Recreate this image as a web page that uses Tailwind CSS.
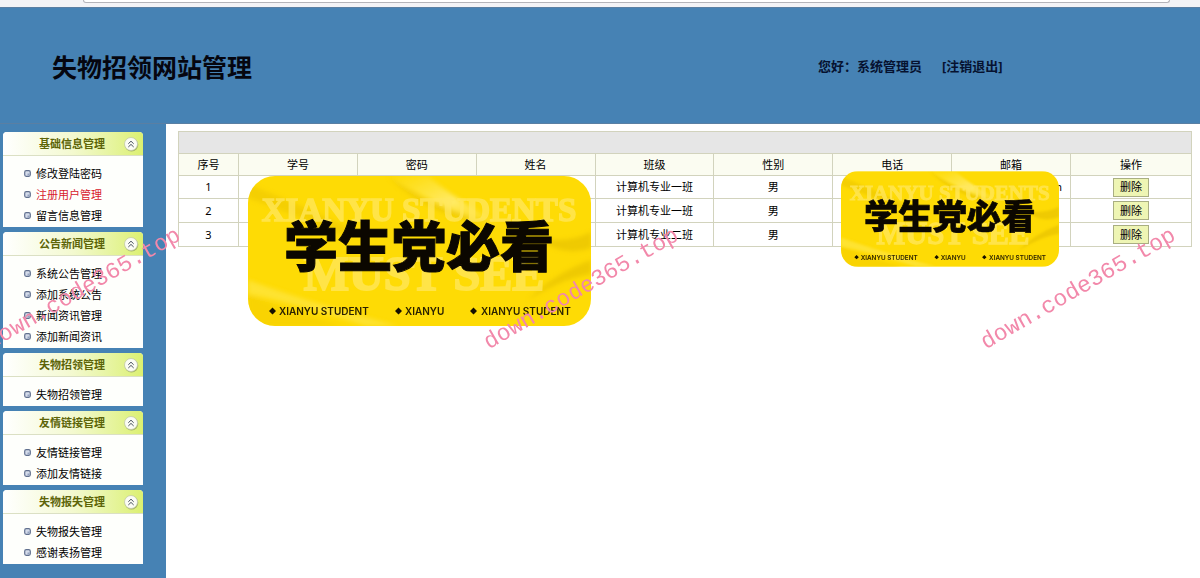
<!DOCTYPE html>
<html lang="zh-CN">
<head>
<meta charset="utf-8">
<title>失物招领网站管理</title>
<script src="https://cdn.jsdelivr.net/npm/@tailwindcss/browser@4"></script>
</head>
<body class="relative flex min-h-screen flex-col overflow-x-hidden bg-white font-['Noto_Sans','Noto_Sans_CJK_SC',sans-serif] text-[11px] text-black">

<svg class="absolute size-0" aria-hidden="true">
  <defs>
    <linearGradient id="fold" x1="0" y1="0" x2="1" y2="1">
      <stop offset="0" stop-color="#ffea5c" stop-opacity="0"/>
      <stop offset=".5" stop-color="#fff08a" stop-opacity=".75"/>
      <stop offset="1" stop-color="#ffe030" stop-opacity="0"/>
    </linearGradient>
    <filter id="soft"><feGaussianBlur stdDeviation="2"/></filter>
    <symbol id="banner" viewBox="0 0 343 150">
      <rect width="343" height="150" fill="#fedb05"/>
      <g filter="url(#soft)">
        <path d="M0 8Q60 32 118 60L90 58Q40 36 0 22Z" fill="#e9c200" opacity=".45"/>
        <path d="M140 0Q185 28 250 52L262 54Q205 22 180 0Z" fill="url(#fold)"/>
        <path d="M140 0Q180 30 240 46L215 44Q165 28 140 0Z" fill="#e3bd00" opacity=".45"/>
        <path d="M343 56Q320 68 290 62Q315 82 343 72Z" fill="#dfba00" opacity=".5"/>
        <path d="M343 84Q305 98 280 124Q315 102 343 98Z" fill="#dfba00" opacity=".5"/>
        <path d="M0 104Q60 126 150 150L118 150Q50 128 0 118Z" fill="#ffec5c" opacity=".5"/>
        <path d="M0 118Q40 136 95 150L0 150Z" fill="#f3cb00" opacity=".5"/>
      </g>
      <g fill="#ffe75f" stroke="#ffe75f" font-family="'Liberation Serif', serif" font-weight="700" text-anchor="middle" opacity=".75">
        <text x="171" y="45" font-size="33" stroke-width="1.500">XIANYU STUDENTS</text>
        <text x="176" y="114" font-size="48" stroke-width="2">MUST SEE</text>
      </g>
      <text x="171" y="91" text-anchor="middle" font-family="'Noto Sans CJK SC', sans-serif" font-weight="900" font-size="54" fill="#0b0700" stroke="#0b0700">学生党必看</text>
      <g font-family="Inter, 'Liberation Sans', sans-serif" font-weight="600" font-size="10" fill="#2b2200">
        <text x="31" y="139">XIANYU STUDENT</text>
        <text x="157" y="139">XIANYU</text>
        <text x="233" y="139">XIANYU STUDENT</text>
      </g>
      <path d="M21 135l3.500-3.500 3.500 3.500-3.500 3.500zM147 135l3.500-3.500 3.500 3.500-3.500 3.500zM222 135l3.500-3.500 3.500 3.500-3.500 3.500z" fill="#150f00"/>
    </symbol>
    <symbol id="fold-up" viewBox="0 0 16 16">
      <circle cx="8.500" cy="8.800" r="6.800" fill="#8d9a58" opacity=".7"/>
      <circle cx="8" cy="8" r="6.500" fill="#fbfcf5" stroke="#c3caa6" stroke-width=".8"/>
      <path d="M5.300 7.800L8 5.200l2.700 2.600M5.300 11L8 8.400l2.700 2.600" fill="none" stroke="#4a5260"/>
    </symbol>
    <symbol id="dot" viewBox="0 0 7 7">
      <rect x=".7" y=".7" width="5.600" height="5.600" rx="1.500" fill="#d5dcea" stroke="#62718f" stroke-width="1.200"/>
      <path d="M3.500 3.500h2v2h-2z" fill="#93a2bf"/>
    </symbol>
  </defs>
</svg>

<div class="h-[7px] bg-[#f3f3f6] pr-[30px] pl-[83px]">
  <div class="h-[3px] rounded-b-sm border border-t-0 border-[#b4b4ba] bg-white"></div>
</div>

<header class="flex h-[117px] items-center border-y border-[#5a7fa3] bg-[#4682b4] font-bold">
  <h1 class="w-[818px] shrink-0 pt-0.5 pl-[52px] text-[25px] leading-8 text-[#05060f]">失物招领网站管理</h1>
  <p class="flex gap-5 text-[13px] leading-5 text-[#061230]"><span>您好：系统管理员</span><a href="#">[注销退出]</a></p>
</header>

<div class="flex flex-1">
  <nav class="flex w-[166px] shrink-0 flex-col gap-[5px] bg-[#4682b4] pt-2 pr-[23px] pb-3 pl-[3px]">
    <section class="overflow-hidden rounded-t bg-[#fefffc] pb-px">
      <h2 class="flex h-6 items-center justify-between border-b border-[#dbe0c4] bg-linear-to-r from-white via-[#f3f9cf] to-[#dcf070] pr-1 pl-9 pt-px font-bold text-[#5c6408]">基础信息管理<button type="button" aria-label="收起"><svg class="size-4"><use href="#fold-up"/></svg></button></h2>
      <ul class="pt-[7px] pl-[21px] leading-[21px]">
        <li class="flex items-center gap-[5px]"><svg class="size-[7px]"><use href="#dot"/></svg><a href="#">修改登陆密码</a></li>
        <li class="flex items-center gap-[5px]"><svg class="size-[7px]"><use href="#dot"/></svg><a href="#" class="text-[#d8202c]">注册用户管理</a></li>
        <li class="flex items-center gap-[5px]"><svg class="size-[7px]"><use href="#dot"/></svg><a href="#">留言信息管理</a></li>
      </ul>
    </section>
    <section class="overflow-hidden rounded-t bg-[#fefffc] pb-px">
      <h2 class="flex h-6 items-center justify-between border-b border-[#dbe0c4] bg-linear-to-r from-white via-[#f3f9cf] to-[#dcf070] pr-1 pl-9 pt-px font-bold text-[#5c6408]">公告新闻管理<button type="button" aria-label="收起"><svg class="size-4"><use href="#fold-up"/></svg></button></h2>
      <ul class="pt-[7px] pl-[21px] leading-[21px]">
        <li class="flex items-center gap-[5px]"><svg class="size-[7px]"><use href="#dot"/></svg><a href="#">系统公告管理</a></li>
        <li class="flex items-center gap-[5px]"><svg class="size-[7px]"><use href="#dot"/></svg><a href="#">添加系统公告</a></li>
        <li class="flex items-center gap-[5px]"><svg class="size-[7px]"><use href="#dot"/></svg><a href="#">新闻资讯管理</a></li>
        <li class="flex items-center gap-[5px]"><svg class="size-[7px]"><use href="#dot"/></svg><a href="#">添加新闻资讯</a></li>
      </ul>
    </section>
    <section class="overflow-hidden rounded-t bg-[#fefffc] pb-px">
      <h2 class="flex h-6 items-center justify-between border-b border-[#dbe0c4] bg-linear-to-r from-white via-[#f3f9cf] to-[#dcf070] pr-1 pl-9 pt-px font-bold text-[#5c6408]">失物招领管理<button type="button" aria-label="收起"><svg class="size-4"><use href="#fold-up"/></svg></button></h2>
      <ul class="pt-[7px] pl-[21px] leading-[21px]">
        <li class="flex items-center gap-[5px]"><svg class="size-[7px]"><use href="#dot"/></svg><a href="#">失物招领管理</a></li>
      </ul>
    </section>
    <section class="overflow-hidden rounded-t bg-[#fefffc] pb-px">
      <h2 class="flex h-6 items-center justify-between border-b border-[#dbe0c4] bg-linear-to-r from-white via-[#f3f9cf] to-[#dcf070] pr-1 pl-9 pt-px font-bold text-[#5c6408]">友情链接管理<button type="button" aria-label="收起"><svg class="size-4"><use href="#fold-up"/></svg></button></h2>
      <ul class="pt-[7px] pl-[21px] leading-[21px]">
        <li class="flex items-center gap-[5px]"><svg class="size-[7px]"><use href="#dot"/></svg><a href="#">友情链接管理</a></li>
        <li class="flex items-center gap-[5px]"><svg class="size-[7px]"><use href="#dot"/></svg><a href="#">添加友情链接</a></li>
      </ul>
    </section>
    <section class="overflow-hidden rounded-t bg-[#fefffc] pb-px">
      <h2 class="flex h-6 items-center justify-between border-b border-[#dbe0c4] bg-linear-to-r from-white via-[#f3f9cf] to-[#dcf070] pr-1 pl-9 pt-px font-bold text-[#5c6408]">失物报失管理<button type="button" aria-label="收起"><svg class="size-4"><use href="#fold-up"/></svg></button></h2>
      <ul class="pt-[7px] pl-[21px] leading-[21px]">
        <li class="flex items-center gap-[5px]"><svg class="size-[7px]"><use href="#dot"/></svg><a href="#">失物报失管理</a></li>
        <li class="flex items-center gap-[5px]"><svg class="size-[7px]"><use href="#dot"/></svg><a href="#">感谢表扬管理</a></li>
      </ul>
    </section>
  </nav>

  <main class="min-w-0 flex-1 pt-[7px] pr-2 pl-3">
    <table class="w-full table-fixed border-collapse text-center leading-4 [&_td]:border [&_td]:border-[#d2d3bd] [&_th]:border [&_th]:border-[#d2d3bd] [&_th]:font-normal">
      <colgroup><col class="w-[60px]"><col><col><col><col><col><col><col><col class="w-[121px]"></colgroup>
      <thead>
        <tr class="h-[22px] bg-[#e6e6e6]"><td colspan="9"></td></tr>
        <tr class="h-[22px] bg-[#fbfcf1]"><th>序号</th><th>学号</th><th>密码</th><th>姓名</th><th>班级</th><th>性别</th><th>电话</th><th>邮箱</th><th>操作</th></tr>
      </thead>
      <tbody>
        <tr class="h-[23px]"><td>1</td><td></td><td></td><td></td><td>计算机专业一班</td><td>男</td><td></td><td class="pr-2 text-right">m</td><td><button type="button" class="mx-auto block h-[19px] w-9 border border-[#a9ae82] bg-[#eef5b4] leading-4">删除</button></td></tr>
        <tr class="h-6"><td>2</td><td></td><td></td><td></td><td>计算机专业一班</td><td>男</td><td></td><td></td><td><button type="button" class="mx-auto block h-[19px] w-9 border border-[#a9ae82] bg-[#eef5b4] leading-4">删除</button></td></tr>
        <tr class="h-6"><td>3</td><td></td><td></td><td></td><td>计算机专业二班</td><td>男</td><td></td><td></td><td><button type="button" class="mx-auto block h-[19px] w-9 border border-[#a9ae82] bg-[#eef5b4] leading-4">删除</button></td></tr>
      </tbody>
    </table>
  </main>
</div>

<svg class="absolute top-[176px] left-[248px] h-[150px] w-[343px] rounded-[27px]" role="img" aria-label="学生党必看"><use href="#banner"/></svg>
<svg class="absolute top-[171px] left-[841px] h-24 w-[218px] rounded-[17px]" role="img" aria-label="学生党必看"><use href="#banner"/></svg>

<div class="pointer-events-none absolute inset-0 overflow-hidden font-['Liberation_Mono',monospace] text-[23px] leading-7 text-[#f288aa]">
  <span class="absolute top-[275px] left-[-27px] -rotate-30">down.code365.top</span>
  <span class="absolute top-[275px] left-[471px] -rotate-30">down.code365.top</span>
  <span class="absolute top-[275px] left-[968px] -rotate-30">down.code365.top</span>
</div>
</body>
</html>
